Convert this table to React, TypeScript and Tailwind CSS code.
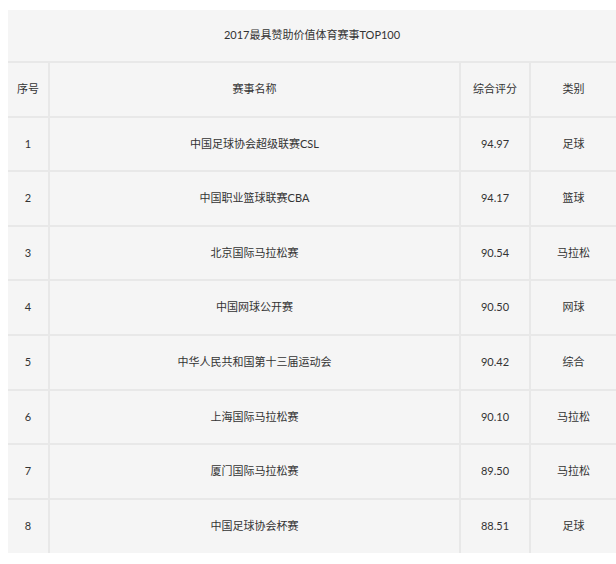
const rows = [
  { id: 1, name: "中国足球协会超级联赛CSL", score: "94.97", type: "足球" },
  { id: 2, name: "中国职业篮球联赛CBA", score: "94.17", type: "篮球" },
  { id: 3, name: "北京国际马拉松赛", score: "90.54", type: "马拉松" },
  { id: 4, name: "中国网球公开赛", score: "90.50", type: "网球" },
  { id: 5, name: "中华人民共和国第十三届运动会", score: "90.42", type: "综合" },
  { id: 6, name: "上海国际马拉松赛", score: "90.10", type: "马拉松" },
  { id: 7, name: "厦门国际马拉松赛", score: "89.50", type: "马拉松" },
  { id: 8, name: "中国足球协会杯赛", score: "88.51", type: "足球" },
];

export default function App() {
  return (
    <div
      className="w-[616px] h-[564px] bg-white pt-[10px] pl-[8px] overflow-hidden text-[11px] text-[#333333]"
      style={{ fontFamily: 'Lato, "Noto Sans CJK SC", sans-serif' }}
    >
      <table className="w-[608px] border-collapse bg-[#f5f5f5] table-fixed">
        <colgroup>
          <col className="w-[41px]" />
          <col className="w-[411px]" />
          <col className="w-[70px]" />
          <col className="w-[86px]" />
        </colgroup>
        <thead>
          <tr className="h-[52px]">
            <td colSpan={4} className="text-center">2017最具赞助价值体育赛事TOP100</td>
          </tr>
          <tr className="h-[54.6px] border-t-2 border-[#e8e8e8]">
            <td className="text-center">序号</td>
            <td className="text-center border-l-2 border-[#e8e8e8]">赛事名称</td>
            <td className="text-center border-l-2 border-[#e8e8e8]">综合评分</td>
            <td className="text-center border-l-2 border-[#e8e8e8]">类别</td>
          </tr>
        </thead>
        <tbody>
          {rows.map((r) => (
            <tr key={r.id} className="h-[54.6px] border-t-2 border-[#e8e8e8]">
              <td className="text-center">{r.id}</td>
              <td className="text-center border-l-2 border-[#e8e8e8]">{r.name}</td>
              <td className="text-center border-l-2 border-[#e8e8e8]">{r.score}</td>
              <td className="text-center border-l-2 border-[#e8e8e8]">{r.type}</td>
            </tr>
          ))}
        </tbody>
      </table>
    </div>
  );
}
